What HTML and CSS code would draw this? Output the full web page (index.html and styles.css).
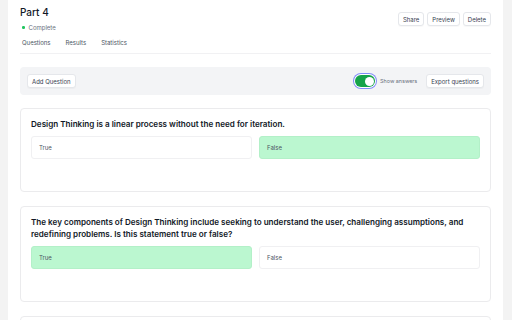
FILE: index.html
```html
<!DOCTYPE html>
<html lang="en">
<head>
	<meta charset="UTF-8">
	<meta name="viewport" content="width=device-width, initial-scale=1.0">
	<title>Part 4</title>
	<link rel="stylesheet" href="styles.css">
</head>
<body>
	<div class="main">
		<div class="head">
			<div class="head-left">
				<h1>Part 4</h1>
				<div class="status"><span class="dot"></span>Complete</div>
			</div>
			<div class="actions">
				<button class="btn">Share</button>
				<button class="btn">Preview</button>
				<button class="btn">Delete</button>
			</div>
		</div>
		<div class="tabs">
			<span>Questions</span>
			<span>Results</span>
			<span>Statistics</span>
		</div>

		<div class="toolbar">
			<button class="btn">Add Question</button>
			<div class="tools">
				<span class="toggle"><span class="knob"></span></span>
				<span class="label">Show answers</span>
				<button class="btn">Export questions</button>
			</div>
		</div>

		<div class="card">
			<p class="q">Design Thinking is a linear process without the need for iteration.</p>
			<div class="options">
				<div class="opt">True</div>
				<div class="opt right">False</div>
			</div>
		</div>

		<div class="card">
			<p class="q">The key components of Design Thinking include seeking to understand the user, challenging assumptions, and redefining problems. Is this statement true or false?</p>
			<div class="options">
				<div class="opt right">True</div>
				<div class="opt">False</div>
			</div>
		</div>

		<div class="card"></div>
	</div>
</body>
</html>
```

FILE: styles.css
```css
body{
	margin: 0;
	background-color: #f3f3f3;
	font-family: Inter, "Liberation Sans", sans-serif;
	color: #111827;
	overflow: hidden;
}
.main{
	margin-left: 8px;
	width: 471px;
	height: 320px;
	padding: 0 12px;
	background-color: #fff;
}
.head{
	display: flex;
	justify-content: space-between;
	padding-top: 6px;
}
.head h1{
	margin: 0;
	font-size: 10px;
	line-height: 13px;
	font-weight: 500;
}
.status{
	margin-top: 4px;
	display: flex;
	align-items: center;
	gap: 4px;
	padding-left: 2px;
	font-size: 6px;
	line-height: 9px;
	color: #6b7280;
}
.dot{
	width: 2.5px;
	height: 2.5px;
	border-radius: 50%;
	background-color: #22c55e;
}
.actions{
	display: flex;
	gap: 3px;
	margin-top: 6px;
}
.btn{
	height: 14px;
	padding: 0 4px;
	border: 1px solid #e5e7eb;
	border-radius: 3px;
	background-color: #fff;
	font-family: inherit;
	font-size: 6px;
	color: #374151;
	box-shadow: 0 1px 1px rgba(0,0,0,0.03);
}
.tabs{
	display: flex;
	gap: 15px;
	margin-top: 6px;
	padding: 0 0 6px 2px;
	border-bottom: 1px solid #f1f1f3;
	font-size: 6px;
	line-height: 9px;
	color: #4b5563;
}
.toolbar{
	display: flex;
	justify-content: space-between;
	align-items: center;
	margin-top: 13px;
	height: 28px;
	padding: 0 7px;
	border-radius: 4px;
	background-color: #f3f4f6;
}
.tools{
	display: flex;
	align-items: center;
}
.toggle{
	position: relative;
	width: 20px;
	height: 12px;
	border-radius: 6px;
	background-color: #16a34a;
	box-shadow: 0 0 0 1px #fff, 0 0 0 2px #818cf8;
}
.knob{
	position: absolute;
	top: 1.5px;
	right: 1.5px;
	width: 9px;
	height: 9px;
	border-radius: 50%;
	background-color: #fff;
}
.label{
	margin: 0 9px 0 5px;
	font-size: 5.4px;
	color: #6b7280;
}
.card{
	margin-top: 13px;
	padding: 9px 10px 32px;
	border: 1px solid #ebebed;
	border-radius: 4px;
}
.card + .card{
	margin-top: 14px;
}
.q{
	margin: 0;
	font-size: 8.1px;
	line-height: 12px;
	font-weight: 600;
}
.options{
	display: grid;
	grid-template-columns: 1fr 1fr;
	gap: 7px;
	margin-top: 6px;
}
.opt{
	height: 21px;
	line-height: 21px;
	padding-left: 7px;
	border: 1px solid #f0f0f2;
	border-radius: 3px;
	font-size: 6px;
	color: #4b5563;
}
.opt.right{
	background-color: #bbf7d0;
	border-color: #b3f0c8;
}
```
